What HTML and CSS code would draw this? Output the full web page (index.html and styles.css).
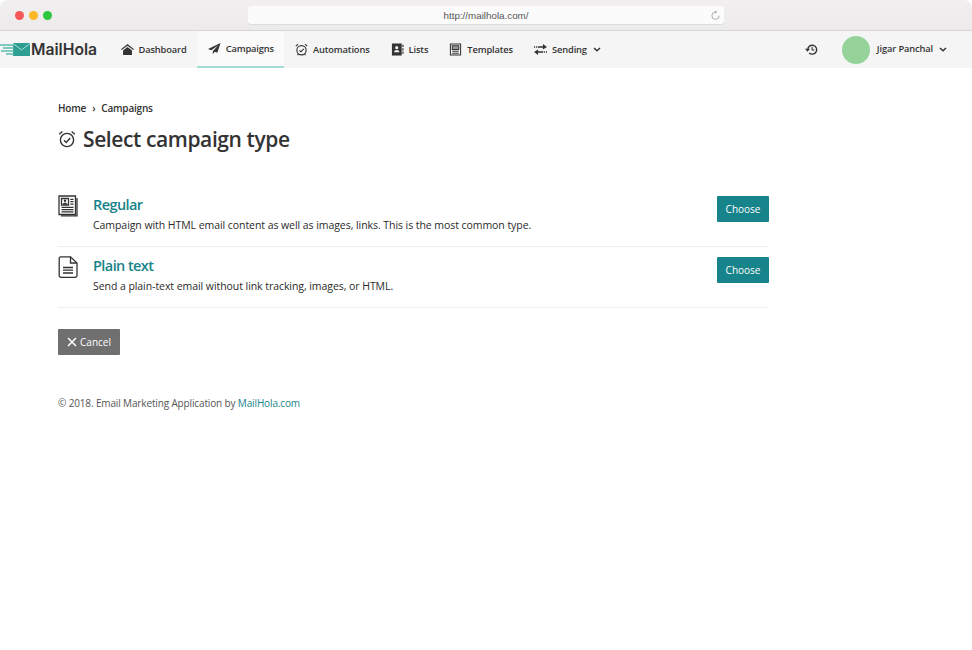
FILE: index.html
```html
<!DOCTYPE html>
<html lang="en">
<head>
<meta charset="utf-8">
<title>MailHola</title>
<link rel="stylesheet" href="styles.css">
</head>
<body>
<header class="chrome">
  <div class="lights"><span class="light red"></span><span class="light amber"></span><span class="light green"></span></div>
  <div class="url">
    <span class="url-text">http://mailhola.com/</span>
    <svg class="reload" viewBox="0 0 12 12"><path d="M6 2.200a4 4 0 1 0 4 4" fill="none" stroke="#a8a8a8" stroke-width="1"/><path d="M5.600 .6 8 2.200 5.600 3.800z" fill="#a8a8a8"/></svg>
  </div>
</header>
<nav class="nav">
  <a class="brand">
    <svg class="brand-mark" viewBox="0 0 30 13"><path d="M13 0h17v13H13z" fill="#2f9e92"/><path d="M13 .5l8.500 6.500L30 .5" fill="none" stroke="#a8dcd5" stroke-width="1"/><path d="M0 2h14M3 5h11M1 8h13M6 11h8" stroke="#5cbcb0" stroke-width="1.300"/></svg>
    <span>MailHola</span>
  </a>
  <ul class="menu">
    <li class="item"><svg class="ico" viewBox="0 0 14 14"><path d="M7 1 0 6.600l.8 1L7 3l6.200 4.600.8-1z" fill="#333"/><path d="M2.200 8 7 4.400 11.800 8v5H2.200z" fill="#333"/></svg>Dashboard</li>
    <li class="item active"><svg class="ico" viewBox="0 0 14 14"><path d="M13.500 1 0 7.500l3.600 1.500L11 3.500 5.200 10v3l2.200-2.400 2.600 1.100z" fill="#333"/></svg>Campaigns</li>
    <li class="item"><svg class="ico" viewBox="0 0 14 14" fill="none" stroke="#333" stroke-width="1.200"><circle cx="7" cy="7.800" r="5"/><path d="M4.800 7.900 6.400 9.500 9.400 6.300M.9 3.300 3.300 1.200M13.100 3.300 10.700 1.200M3.700 11.800l-1 1.200M10.300 11.800l1 1.200"/></svg>Automations</li>
    <li class="item"><svg class="ico" viewBox="0 0 14 14"><path d="M1 .5h10.500v13H1z" fill="#333"/><circle cx="6.200" cy="5" r="1.700" fill="#f5f5f5"/><path d="M3.400 10c0-3.200 5.600-3.200 5.600 0z" fill="#f5f5f5"/><path d="M12.200 2h1.300v2.400h-1.300zM12.200 5.600h1.300V8h-1.300zM12.200 9.200h1.300v2.400h-1.300z" fill="#333"/></svg>Lists</li>
    <li class="item"><svg class="ico" viewBox="0 0 14 14" fill="none" stroke="#333" stroke-width="1.100"><path d="M1.500 1h11v12h-11z"/><path d="M3.500 3h7v4h-7z" fill="#999"/><path d="M3.500 9h7M3.500 11h7"/></svg>Templates</li>
    <li class="item"><svg class="ico" viewBox="0 0 14 14"><path d="M4 3.400h5.600V1.200L14 4.400 9.600 7V5.200H4zM10 8.800H4.400V7L0 9.800l4.400 3v-2.200H10z" fill="#333"/><path d="M0 3.400h1.200v1.800H0zM2.200 3.400h1v1.800h-1zM10.800 8.800h1v1.800h-1zM12.800 8.800H14v1.800h-1.200z" fill="#333"/></svg>Sending<svg class="chev" viewBox="0 0 8 5"><path d="M1 1l3 2.700L7 1" fill="none" stroke="#333" stroke-width="1.500"/></svg></li>
  </ul>
  <div class="account">
    <svg class="history" viewBox="0 0 14 14"><path d="M3 7.200a4.800 4.800 0 1 1 1.500 3.500" fill="none" stroke="#333" stroke-width="1.500"/><path d="M0 6.200h5.400L2.700 9.400z" fill="#333"/><path d="M7.700 4.300v3.200h2.500" fill="none" stroke="#333" stroke-width="1.200"/></svg>
    <span class="avatar"></span>
    <span class="user">Jigar Panchal</span>
    <svg class="chev" viewBox="0 0 8 5"><path d="M1 1l3 2.700L7 1" fill="none" stroke="#333" stroke-width="1.500"/></svg>
  </div>
</nav>
<main class="page">
  <div class="crumbs"><span>Home</span><span class="sep">›</span><span>Campaigns</span></div>
  <h1 class="title"><svg class="title-ico" viewBox="0 0 18 18" fill="none" stroke="#333" stroke-width="1.400"><circle cx="9" cy="10" r="6.600"/><path d="M6 10.200 8.200 12.400 12.200 8M1.200 4.300 4.400 1.500M16.800 4.300 13.600 1.500"/></svg>Select campaign type</h1>
  <ul class="types">
    <li class="type">
      <svg class="type-ico" viewBox="0 0 20 22" fill="none" stroke="#333" stroke-width="1.300"><path d="M1 1h16.500v18.500H1z"/><path d="M19 3v17.800H3" stroke-width="1.300"/><path d="M3.500 3.500h7v6.500h-7z"/><circle cx="7" cy="5.800" r="1.200" fill="#333" stroke="none"/><path d="M4.500 9.500c0-2.500 5-2.500 5 0z" fill="#333" stroke="none"/><path d="M12.300 4.300h3.200M12.300 6.700h3.200M12.300 9.100h3.200M3.500 12.300h12M3.500 14.600h12M3.500 16.900h12"/></svg>
      <div class="type-body">
        <a class="type-name">Regular</a>
        <p class="type-desc">Campaign with HTML email content as well as images, links. This is the most common type.</p>
      </div>
      <a class="btn choose">Choose</a>
    </li>
    <li class="type">
      <svg class="type-ico" viewBox="0 0 20 22" fill="none" stroke="#333" stroke-width="1.300"><path d="M3 .8h9.500L19 7v12.500a1.800 1.800 0 0 1-1.800 1.800H3a1.800 1.800 0 0 1-1.800-1.800V2.600A1.800 1.800 0 0 1 3 .8z"/><path d="M12.500 .8V7H19M5 11.500h10M5 14.200h10M5 17h10"/></svg>
      <div class="type-body">
        <a class="type-name">Plain text</a>
        <p class="type-desc">Send a plain-text email without link tracking, images, or HTML.</p>
      </div>
      <a class="btn choose">Choose</a>
    </li>
  </ul>
  <a class="btn cancel"><svg class="x" viewBox="0 0 10 10"><path d="M1 1l8 8M9 1 1 9" stroke="#fff" stroke-width="1.500"/></svg>Cancel</a>
  <footer class="foot">© 2018. Email Marketing Application by <a class="foot-link">MailHola.com</a></footer>
</main>
</body>
</html>
```
FILE: styles.css
```css
* { box-sizing: border-box; }
html, body { margin: 0; padding: 0; }
body { background: #fff; color: #333; font-family: "Open Sans", sans-serif; height: 650px; overflow: hidden; }
ul { list-style: none; margin: 0; padding: 0; }

.chrome { position: relative; height: 31px; display: flex; align-items: flex-start; justify-content: center; padding-top: 6px; background: linear-gradient(#f1efef, #eceaea); border-bottom: 1px solid #d6d6d6; border-radius: 8px 8px 0 0; }
.lights { position: absolute; left: 15px; top: 11px; display: flex; gap: 5px; }
.light { width: 9px; height: 9px; border-radius: 50%; }
.red { background: #f5565a; }
.amber { background: #fbb826; }
.green { background: #2cc63f; }
.url { position: relative; width: 476px; height: 18px; background: #fbfbfb; border-radius: 3px; box-shadow: 0 1px 0 #dcdcdc; text-align: center; font-family: "Liberation Sans", sans-serif; font-size: 9.800px; line-height: 19px; color: #555; }
.reload { position: absolute; right: 3px; top: 4px; width: 11px; height: 11px; }

.nav { display: flex; align-items: stretch; height: 37px; background: #f5f5f5; }
.brand { display: flex; align-items: center; gap: 1px; width: 110px; font-family: "Inter", "Open Sans", sans-serif; font-size: 15.700px; font-weight: 600; color: #333; }
.brand-mark { width: 30px; height: 13px; flex: none; }
.menu { display: flex; }
.item { display: flex; align-items: center; gap: 5px; padding: 0 10.500px; font-size: 9.300px; letter-spacing: -.13px; font-weight: 600; color: #333; }
.item.active { background: #fafafa; border-bottom: 2px solid #a5dbd6; }
.ico { width: 13px; height: 13px; flex: none; }
.chev { width: 8px; height: 5px; flex: none; margin-left: 1px; }
.account { margin-left: auto; display: flex; align-items: center; padding-right: 25px; font-size: 9.300px; letter-spacing: -.13px; font-weight: 600; }
.history { width: 13px; height: 13px; margin-right: 24px; }
.avatar { width: 28px; height: 28px; border-radius: 50%; background: #96d39b; margin-right: 7px; }
.user { margin-right: 5px; margin-top: -2px; }

.page { width: 769px; padding-left: 58px; }
.crumbs { display: flex; gap: 6px; margin-top: 33px; font-size: 10px; letter-spacing: -.2px; font-weight: 600; line-height: 14px; color: #333; }
.title { display: flex; align-items: center; margin: 9px 0 0; font-size: 21px; letter-spacing: -.4px; font-weight: 600; line-height: 30px; color: #333; }
.title-ico { width: 18px; height: 18px; margin-right: 7px; }
.types { margin-top: 32px; }
.type { display: flex; align-items: flex-start; height: 61px; padding-top: 10px; border-bottom: 1px solid #eee; }
.type-ico { width: 20px; height: 22px; flex: none; margin-right: 15px; margin-top: -1px; }
.type-body { flex: 1; }
.type-name { display: block; font-size: 14.500px; letter-spacing: -.58px; font-weight: 600; line-height: 17px; color: #17838a; }
.type-desc { margin: 5px 0 0; font-size: 10.500px; letter-spacing: -.06px; line-height: 15px; color: #2b2b2b; }
.btn { display: flex; align-items: center; justify-content: center; border-radius: 1px; color: #fff; font-size: 10px; }
.choose { width: 52px; height: 26px; background: #17838a; }
.cancel { width: 62px; height: 26px; margin-top: 21px; background: #6f6f6f; gap: 3px; }
.x { width: 10px; height: 10px; }
.foot { margin-top: 41px; font-size: 10px; letter-spacing: -.14px; line-height: 14px; color: #555; }
.foot-link { color: #17838a; }
```
